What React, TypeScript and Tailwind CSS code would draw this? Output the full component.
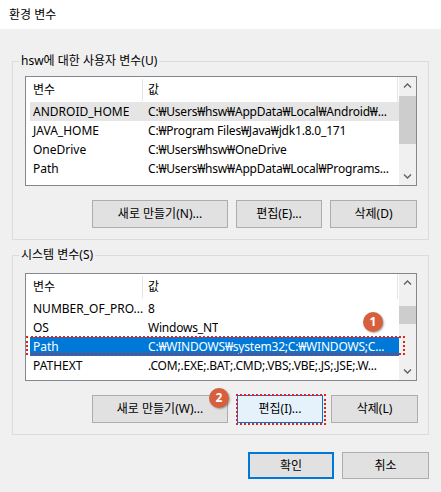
import React from 'react'

type Var = { name: string; value: string; state?: 'sel' | 'dim' }

const userVars: Var[] = [
  { name: 'ANDROID_HOME', value: 'C:₩Users₩hsw₩AppData₩Local₩Android₩...', state: 'dim' },
  { name: 'JAVA_HOME', value: 'C:₩Program Files₩Java₩jdk1.8.0_171' },
  { name: 'OneDrive', value: 'C:₩Users₩hsw₩OneDrive' },
  { name: 'Path', value: 'C:₩Users₩hsw₩AppData₩Local₩Programs...' },
]

const sysVars: Var[] = [
  { name: 'NUMBER_OF_PRO...', value: '8' },
  { name: 'OS', value: 'Windows_NT' },
  { name: 'Path', value: 'C:₩WINDOWS₩system32;C:₩WINDOWS;C...', state: 'sel' },
  { name: 'PATHEXT', value: '.COM;.EXE;.BAT;.CMD;.VBS;.VBE;.JS;.JSE;.W...' },
]

function Chevron({ up }: { up?: boolean }) {
  return (
    <svg width="9" height="9" viewBox="0 0 9 9">
      <polyline
        points={up ? '1,6.5 4.5,3 8,6.5' : '1,2.5 4.5,6 8,2.5'}
        fill="none"
        stroke="#606060"
        strokeWidth="1.4"
      />
    </svg>
  )
}

function Scrollbar({ thumb }: { thumb: string }) {
  return (
    <div className="flex h-full w-[17px] flex-col bg-[#f0f0f0]">
      <div className="flex h-[17px] items-center justify-center"><Chevron up /></div>
      <div className={`w-full bg-[#cdcdcd] ${thumb}`} />
      <div className="flex-1" />
      <div className="flex h-[17px] items-center justify-center"><Chevron /></div>
    </div>
  )
}

function ListView({ rows, h, thumb, mt }: { rows: Var[]; h: string; thumb: string; mt: string }) {
  return (
    <div className={`ml-[12px] flex w-[392px] border border-[#828790] bg-white ${h} ${mt}`}>
      <div className="flex-1 overflow-hidden">
        <div className="flex h-[25px] w-[372px] items-center border-r border-[#e5e5e5]">
          <div className="w-[116px] pl-[7px]">변수</div>
          <div className="h-[22px] w-px bg-[#e5e5e5]" />
          <div className="pl-[5px]">값</div>
        </div>
        {rows.map(r => (
          <div
            key={r.name}
            className={`ml-[4px] flex h-[19px] items-center ${r.state === 'sel' ? 'bg-[#0078d7] text-white' : r.state === 'dim' ? 'bg-[#e5e5e5]' : ''}`}
          >
            <div className="w-[118px] shrink-0 overflow-hidden whitespace-nowrap pl-[3px]">{r.name}</div>
            <div className="overflow-hidden whitespace-nowrap tracking-[-0.2px]">{r.value}</div>
          </div>
        ))}
      </div>
      <Scrollbar thumb={thumb} />
    </div>
  )
}

function Btn({ children, className = '' }: { children: React.ReactNode; className?: string }) {
  return (
    <button className={`flex items-center justify-center ${className}`}>{children}</button>
  )
}

const plain = 'border border-[#adadad] bg-[#e1e1e1]'

function Badge({ n, className }: { n: number; className: string }) {
  return (
    <div className={`absolute flex h-[20px] w-[20px] items-center justify-center rounded-full bg-[#d6603e] text-[12px] font-bold text-white shadow-[1px_1px_2px_rgba(0,0,0,0.35)] ${className}`}>
      {n}
    </div>
  )
}

export default function App() {
  return (
    <div className="relative h-[492px] w-[441px] overflow-hidden bg-[#f0f0f0] font-['Noto_Sans','Noto_Sans_CJK_KR',sans-serif] text-[12px] text-black">
      <div className="flex h-[29px] items-center bg-white pl-[9px]">환경 변수</div>

      <fieldset className="ml-[12px] mt-[24px] w-[417px] border border-[#dcdcdc] pb-[11px]">
        <legend className="ml-[6px] px-[2px] leading-[16px]">hsw에 대한 사용자 변수(U)</legend>
        <ListView rows={userVars} h="h-[110px]" mt="mt-[7px]" thumb="mt-[2px] h-[48px]" />
        <div className="mt-[14px] flex h-[28px]">
          <Btn className={`ml-[79px] w-[136px] ${plain}`}>새로 만들기(N)...</Btn>
          <Btn className={`ml-[8px] w-[86px] ${plain}`}>편집(E)...</Btn>
          <Btn className={`ml-[8px] w-[87px] ${plain}`}>삭제(D)</Btn>
        </div>
      </fieldset>

      <fieldset className="ml-[12px] mt-[7px] w-[417px] border border-[#dcdcdc] pb-[11px]">
        <legend className="ml-[6px] px-[2px] leading-[16px]">시스템 변수(S)</legend>
        <ListView rows={sysVars} h="h-[108px]" mt="mt-[10px]" thumb="mt-[15px] h-[18px]" />
        <div className="mt-[14px] flex h-[28px]">
          <Btn className={`ml-[79px] w-[136px] ${plain}`}>새로 만들기(W)...</Btn>
          <Btn className="ml-[9px] w-[86px] border border-[#0078d7] bg-[#e5f1fb]">편집(I)...</Btn>
          <Btn className={`ml-[8px] w-[87px] ${plain}`}>삭제(L)</Btn>
        </div>
      </fieldset>

      <div className="mt-[17px] flex h-[27px]">
        <Btn className="ml-[248px] w-[86px] border-2 border-[#0078d7] bg-[#e1e1e1]">확인</Btn>
        <Btn className={`ml-[8px] w-[87px] ${plain}`}>취소</Btn>
      </div>

      {/* annotations */}
      <div className="absolute left-[26px] top-[336px] h-[19px] w-[379px] border-2 border-dotted border-[#e3211b]" />
      <div className="absolute left-[236px] top-[394px] h-[31px] w-[90px] border-2 border-dotted border-[#e3211b]" />
      <Badge n={1} className="left-[363px] top-[312px]" />
      <Badge n={2} className="left-[209px] top-[388px]" />
    </div>
  )
}
